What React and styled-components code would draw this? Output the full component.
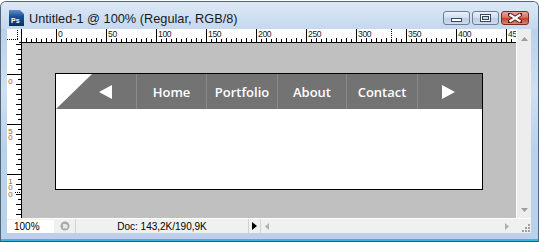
import React from 'react';
import styled, { createGlobalStyle } from 'styled-components';

const GlobalStyle = createGlobalStyle`
  html, body {
    margin: 0;
    padding: 0;
    background: #fff;
  }
  body {
    width: 539px;
    height: 242px;
    overflow: hidden;
    font-family: "Liberation Sans", Arial, sans-serif;
  }
`;

const Window = styled.div`
  box-sizing: border-box;
  margin-top: 1px;
  width: 539px;
  height: 241px;
  display: flex;
  flex-direction: column;
  background: #b9d1ea;
  border: 1px solid #52657a;
  border-bottom: none;
  border-radius: 6px 6px 0 0;
  overflow: hidden;
`;

const TitleBar = styled.div`
  height: 27px;
  flex: none;
  display: flex;
  align-items: flex-start;
  padding: 0 9px 0 8px;
  background: linear-gradient(#dde8f5, #c4d8ef);
`;

const PsIcon = styled.div`
  width: 15px;
  height: 16px;
  margin-top: 8px;
  box-sizing: border-box;
  display: flex;
  align-items: flex-end;
  padding: 0 0 2px 2px;
  background: linear-gradient(#5d8fd0 0%, #1f4f98 40%, #0e2c66 100%);
  clip-path: polygon(0 0, 11px 0, 15px 4px, 15px 16px, 0 16px);
  color: #fff;
  font: bold 7px/7px "Liberation Sans", Arial, sans-serif;
`;

const Title = styled.div`
  margin: 10px 0 0 5px;
  font-size: 12.75px;
  line-height: 14px;
  color: #1a1a1a;
  white-space: nowrap;
`;

const Captions = styled.div`
  margin: 9px 0 0 auto;
  display: flex;
  gap: 2px;
`;

const CaptionButton = styled.div`
  width: ${p => p.$w}px;
  height: 14px;
  box-sizing: border-box;
  border: 1px solid ${p => (p.$close ? '#7c2a1f' : '#6a7d95')};
  border-radius: 3px;
  display: flex;
  align-items: center;
  justify-content: center;
  background: ${p =>
    p.$close
      ? 'linear-gradient(#e8a898 0%, #d6705c 45%, #c2412b 55%, #d88a78 100%)'
      : 'linear-gradient(#e9f0f8 0%, #d3e0ef 45%, #bccfe6 55%, #cddcee 100%)'};
`;

const Body = styled.div`
  display: flex;
  flex: none;
`;

const SideFrame = styled.div`
  width: ${p => p.$w}px;
  flex: none;
  background: linear-gradient(#b9d1ea 0%, #cfe0f2 30%, #b9d1ea 60%);
`;

const Workspace = styled.div`
  display: grid;
  grid-template-columns: 15px 494px 15px;
  grid-template-rows: 14px 175px 15px;
`;

const Corner = styled.div`
  background: #fff;
`;

const RulerBox = styled.div`
  background: #fff;
  overflow: hidden;
  svg { display: block; }
`;

const VScroll = styled.div`
  grid-column: 3;
  grid-row: 1 / 3;
  box-sizing: border-box;
  border-left: 1px solid #fff;
  background: #ededed;
  display: flex;
  flex-direction: column;
  justify-content: space-between;
  align-items: center;
  padding: 8px 0 6px 0;
`;

const Canvas = styled.div`
  background: #c0c0c0;
  padding: 30px 0 0 33px;
`;

const Doc = styled.div`
  width: 428px;
  height: 117px;
  box-sizing: border-box;
  border: 1px solid #000;
  background: #fff;
`;

const Nav = styled.div`
  display: flex;
  height: 35px;
`;

const NavArrow = styled.div`
  width: ${p => p.$w}px;
  flex: none;
  box-sizing: border-box;
  display: flex;
  align-items: center;
  padding-left: ${p => p.$pad}px;
  background: #737373;
  border-left: ${p => (p.$first ? 'none' : '1px solid #8a8a8a')};
  clip-path: ${p => (p.$first ? 'polygon(36px 0, 100% 0, 100% 100%, 0 100%)' : 'none')};
`;

const Triangle = styled.div`
  width: 0;
  height: 0;
  border-top: 7.5px solid transparent;
  border-bottom: 7.5px solid transparent;
  ${p => (p.$dir === 'left'
    ? 'border-right: 13px solid #fff;'
    : 'border-left: 13px solid #fff;')}
`;

const NavItem = styled.div`
  width: ${p => p.$w}px;
  flex: none;
  box-sizing: border-box;
  display: flex;
  align-items: center;
  justify-content: center;
  background: #737373;
  border-left: 1px solid #8a8a8a;
  color: #fff;
  font: 600 13px "Open Sans", sans-serif;
`;

const StatusBar = styled.div`
  grid-column: 1 / 4;
  display: flex;
  box-sizing: border-box;
  border-top: 1px solid #fff;
  background: #f0f0f0;
  font-size: 10px;
  color: #000;
`;

const ZoomBox = styled.div`
  width: 47px;
  margin-top: 1px;
  box-sizing: border-box;
  padding-left: 7px;
  background: #fff;
  line-height: 13px;
`;

const StatusCell = styled.div`
  width: ${p => p.$w}px;
  flex: none;
  display: flex;
  align-items: center;
  justify-content: center;
  box-sizing: border-box;
  border-right: ${p => (p.$sep ? '1px solid #d2d2d2' : 'none')};
`;

const HScroll = styled.div`
  width: 254px;
  display: flex;
  align-items: center;
  justify-content: space-between;
  padding: 0 6px 0 4px;
  box-sizing: border-box;
`;

const Grip = styled.div`
  flex: 1;
  display: flex;
  align-items: flex-end;
  justify-content: flex-end;
  padding: 0 1px 1px 0;
`;

const BottomFrame = styled.div`
  height: 9px;
  box-sizing: border-box;
  background: #b9d1ea;
  border-bottom: 1px solid #2a5a7a;
  box-shadow: inset 0 -2px 0 #36b6e0;
`;

const rulerFont = 'Liberation Sans, Arial, sans-serif';

const TopRuler = () => {
  const ticks = [];
  for (let i = -30; i <= 460; i += 5) {
    const x = 34 + i + 0.5;
    if (i % 50 === 0) {
      ticks.push(<line key={i} x1={x} x2={x} y1={0} y2={14} stroke="#000" />);
      ticks.push(
        <text key={'t' + i} x={x + 1.5} y={7.8} fontSize="8.6" fontFamily={rulerFont} fill="#1a1a1a" letterSpacing="-0.4">
          {i}
        </text>
      );
    } else {
      const h = i % 10 === 0 ? 4 : 3;
      ticks.push(<line key={i} x1={x} x2={x} y1={13 - h} y2={13} stroke="#000" />);
    }
  }
  return (
    <svg width="494" height="14">
      {ticks}
      <line x1="0" x2="494" y1="13.5" y2="13.5" stroke="#000" />
      <line x1="369.5" x2="369.5" y1="0" y2="13" stroke="#000" strokeDasharray="1 1" />
    </svg>
  );
};

const LeftRuler = () => {
  const ticks = [];
  for (let i = -30; i <= 140; i += 5) {
    const y = 31 + i + 0.5;
    if (i % 50 === 0) {
      ticks.push(<line key={i} x1={0} x2={15} y1={y} y2={y} stroke="#000" />);
      ticks.push(
        <text
          key={'t' + i}
          x={3.5}
          y={y + 2}
          fontSize="8"
          fontFamily={rulerFont}
          fill="#9a6410"
          letterSpacing="-2.5"
          style={{ writingMode: 'vertical-rl', textOrientation: 'upright' }}
        >
          {i}
        </text>
      );
    } else {
      const w = i % 10 === 0 ? 5 : 3;
      ticks.push(<line key={i} x1={14 - w} x2={14} y1={y} y2={y} stroke="#000" />);
    }
  }
  return (
    <svg width="15" height="175">
      {ticks}
      <line x1="14.5" x2="14.5" y1="0" y2="175" stroke="#000" />
      <line x1="8" x2="14" y1="149.5" y2="149.5" stroke="#000" strokeDasharray="1 1" />
    </svg>
  );
};

const App = () => {
  return (
    <>
      <GlobalStyle />
      <Window>
        <TitleBar>
          <PsIcon>Ps</PsIcon>
          <Title>Untitled-1 @ 100% (Regular, RGB/8)</Title>
          <Captions>
            <CaptionButton $w={27}>
              <svg width="12" height="5" style={{ marginTop: 5 }}>
                <rect x="0.5" y="0.5" width="10" height="3" fill="#fff" stroke="#38475a" />
              </svg>
            </CaptionButton>
            <CaptionButton $w={27}>
              <svg width="12" height="9">
                <rect x="0.5" y="0.5" width="10" height="7" fill="#fff" stroke="#38475a" />
                <rect x="2.5" y="2.5" width="6" height="3" fill="#c9d6e6" stroke="#38475a" />
              </svg>
            </CaptionButton>
            <CaptionButton $w={28} $close>
              <svg width="14" height="10" viewBox="0 0 14 10">
                <path d="M1 1 L13 9 M13 1 L1 9" stroke="#5a1a10" strokeWidth="4" strokeLinecap="square" />
                <path d="M1.5 1.5 L12.5 8.5 M12.5 1.5 L1.5 8.5" stroke="#fff" strokeWidth="2.2" />
              </svg>
            </CaptionButton>
          </Captions>
        </TitleBar>
        <Body>
          <SideFrame $w={6} />
          <Workspace>
            <Corner>
              <svg width="15" height="14" style={{ display: 'block' }}>
                <line x1="0" x2="12" y1="10.5" y2="10.5" stroke="#000" strokeDasharray="1 1" />
                <line x1="10.5" x2="10.5" y1="1" y2="10" stroke="#000" strokeDasharray="1 1" />
                <line x1="14.5" x2="14.5" y1="0" y2="14" stroke="#000" />
                <line x1="12" x2="15" y1="13.5" y2="13.5" stroke="#000" />
              </svg>
            </Corner>
            <RulerBox>
              <TopRuler />
            </RulerBox>
            <VScroll>
              <svg width="7" height="4"><path d="M0 4 L3.5 0 L7 4 Z" fill="#9c9c9c" /></svg>
              <svg width="7" height="4"><path d="M0 0 L7 0 L3.5 4 Z" fill="#9c9c9c" /></svg>
            </VScroll>
            <RulerBox>
              <LeftRuler />
            </RulerBox>
            <Canvas>
              <Doc>
                <Nav>
                  <NavArrow $w={80} $pad={43} $first>
                    <Triangle $dir="left" />
                  </NavArrow>
                  <NavItem $w={70}>Home</NavItem>
                  <NavItem $w={71}>Portfolio</NavItem>
                  <NavItem $w={69}>About</NavItem>
                  <NavItem $w={71}>Contact</NavItem>
                  <NavArrow $w={65} $pad={24}>
                    <Triangle $dir="right" />
                  </NavArrow>
                </Nav>
              </Doc>
            </Canvas>
            <StatusBar>
              <ZoomBox>100%</ZoomBox>
              <StatusCell $w={22} $sep>
                <svg width="10" height="10">
                  <circle cx="5" cy="5" r="4.5" fill="#a8a8a8" />
                  <path d="M3 3 H6 L7.5 4.5 V7.5 H3 Z" fill="#e8e8e8" />
                </svg>
              </StatusCell>
              <StatusCell $w={173} $sep>Doc: 143,2K/190,9K</StatusCell>
              <StatusCell $w={12} $sep>
                <svg width="5" height="8"><path d="M0 0 L5 4 L0 8 Z" fill="#000" /></svg>
              </StatusCell>
              <HScroll>
                <svg width="4" height="7"><path d="M4 0 L0 3.5 L4 7 Z" fill="#b0b0b0" /></svg>
                <svg width="4" height="7"><path d="M0 0 L4 3.5 L0 7 Z" fill="#b0b0b0" /></svg>
              </HScroll>
              <Grip>
                <svg width="8" height="8">
                  <g fill="#a0a0a0">
                    <rect x="6" y="0" width="2" height="2" />
                    <rect x="3" y="3" width="2" height="2" />
                    <rect x="6" y="3" width="2" height="2" />
                    <rect x="0" y="6" width="2" height="2" />
                    <rect x="3" y="6" width="2" height="2" />
                    <rect x="6" y="6" width="2" height="2" />
                  </g>
                </svg>
              </Grip>
            </StatusBar>
          </Workspace>
          <SideFrame $w={7} />
        </Body>
        <BottomFrame />
      </Window>
    </>
  );
};

export default App;
